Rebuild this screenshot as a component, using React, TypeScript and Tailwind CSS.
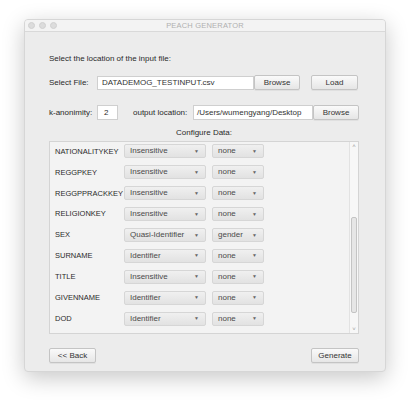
import React from "react";

interface FieldRow {
  name: string;
  kind: string;
  hierarchy: string;
}

const rows: FieldRow[] = [
  { name: "NATIONALITYKEY", kind: "Insensitive", hierarchy: "none" },
  { name: "REGGPKEY", kind: "Insensitive", hierarchy: "none" },
  { name: "REGGPPRACKKEY", kind: "Insensitive", hierarchy: "none" },
  { name: "RELIGIONKEY", kind: "Insensitive", hierarchy: "none" },
  { name: "SEX", kind: "Quasi-Identifier", hierarchy: "gender" },
  { name: "SURNAME", kind: "Identifier", hierarchy: "none" },
  { name: "TITLE", kind: "Insensitive", hierarchy: "none" },
  { name: "GIVENNAME", kind: "Identifier", hierarchy: "none" },
  { name: "DOD", kind: "Identifier", hierarchy: "none" },
];

// mac-ish push button
const Button = ({ label, className }: { label: string; className: string }) => {
  return (
    <button className={"shrink-0 h-[15px] rounded-[2px] border border-[#c4c4c4] bg-gradient-to-b from-[#fafafa] to-[#e6e6e6] text-[8px] text-[#333] leading-none shadow-[0_1px_0_rgba(0,0,0,0.05)] " + className}>
      {label}
    </button>
  );
};

const Dropdown = ({ value, className }: { value: string; className: string }) => {
  return (
    <div className={"shrink-0 flex h-[14px] items-center justify-between rounded-[2px] border border-[#d6d6d6] bg-gradient-to-b from-[#f0f0f0] to-[#e2e2e2] pl-[5px] pr-[6px] " + className}>
      <span className="text-[8px] text-[#4a4a4a] leading-none">{value}</span>
      <span className="text-[5px] text-[#666] leading-none">▼</span>
    </div>
  );
};

const App = () => {
  return (
    <div className="w-[410px] h-[400px] bg-white pt-[19px] pl-[24px]" style={{ fontFamily: '"Liberation Sans", Arial, sans-serif' }}>
      <div className="w-[362px] h-[353px] bg-[#ececec] rounded-[4px] shadow-[0_6px_22px_rgba(0,0,0,0.22)] border border-[#d6d6d6] flex flex-col overflow-hidden">
        {/* title bar */}
        <div className="relative h-[12px] bg-[#f3f3f3] border-b border-[#d9d9d9] flex items-center pl-[3px] gap-[4px]">
          <span className="w-[7px] h-[7px] rounded-full bg-[#dcdcdc] border border-[#d0d0d0]" />
          <span className="w-[7px] h-[7px] rounded-full bg-[#dcdcdc] border border-[#d0d0d0]" />
          <span className="w-[7px] h-[7px] rounded-full bg-[#dcdcdc] border border-[#d0d0d0]" />
          <span className="absolute inset-0 flex items-center justify-center text-[7.5px] text-[#b0b0b0] tracking-[0.2px]">PEACH GENERATOR</span>
        </div>

        <div className="flex flex-col pl-[24px] pr-[26px] text-[#2a2a2a]">
          <p className="mt-[22px] h-[10px] text-[8px] leading-[10px]">Select the location of the input file:</p>

          <div className="mt-[11px] flex items-center h-[15px]">
            <span className="w-[48px] shrink-0 text-[8px]">Select File:</span>
            <div className="w-[157px] shrink-0 h-[14px] bg-white border border-[#cfcfcf] flex items-center pl-[4px] text-[8px] text-[#333]">
              DATADEMOG_TESTINPUT.csv
            </div>
            <Button label="Browse" className="w-[46px]" />
            <Button label="Load" className="w-[47px] ml-[11px]" />
          </div>

          <div className="mt-[15px] flex items-center h-[15px]">
            <span className="w-[48px] shrink-0 text-[8px]">k-anonimity:</span>
            <div className="w-[21px] shrink-0 h-[15px] bg-white border border-[#cfcfcf] flex items-center pl-[6px] text-[8px]">2</div>
            <span className="ml-[15px] w-[60px] shrink-0 text-[8px]">output location:</span>
            <div className="w-[120px] shrink-0 h-[15px] bg-white border border-[#cfcfcf] flex items-center pl-[3px] text-[8px] text-[#333]">
              /Users/wumengyang/Desktop
            </div>
            <Button label="Browse" className="w-[46px]" />
          </div>

          <p className="mt-[8px] h-[10px] text-[8px] leading-[10px] text-center">Configure Data:</p>

          <div className="mt-[3px] w-[310px] h-[193px] border border-[#d4d4d4] bg-[#f3f3f3] flex overflow-hidden">
            <div className="flex-1 flex flex-col -mt-[1px]">
              {rows.map((r) => (
                <div key={r.name} className="h-[20.9px] shrink-0 flex items-center">
                  <span className="w-[74px] shrink-0 pl-[5px] text-[7.5px] text-[#2a2a2a] whitespace-nowrap">{r.name}</span>
                  <Dropdown value={r.kind} className="w-[82px]" />
                  <Dropdown value={r.hierarchy} className="w-[52px] ml-[6px]" />
                </div>
              ))}
            </div>
            <div className="w-[9px] border-l border-[#e2e2e2] bg-[#f7f7f7] flex flex-col items-center">
              <span className="mt-[1px] text-[6px] text-[#999] leading-[6px]">˄</span>
              <div className="mt-[68px] w-[6px] h-[96px] rounded-[2px] border border-[#c4c4c4] bg-[#e6e6e6]" />
              <span className="mt-auto mb-[1px] text-[6px] text-[#999] leading-[6px]">˅</span>
            </div>
          </div>

          <div className="mt-[14px] flex justify-between h-[15px]">
            <Button label="<< Back" className="w-[47px]" />
            <Button label="Generate" className="w-[48px]" />
          </div>
        </div>
      </div>
    </div>
  );
};

export default App;
